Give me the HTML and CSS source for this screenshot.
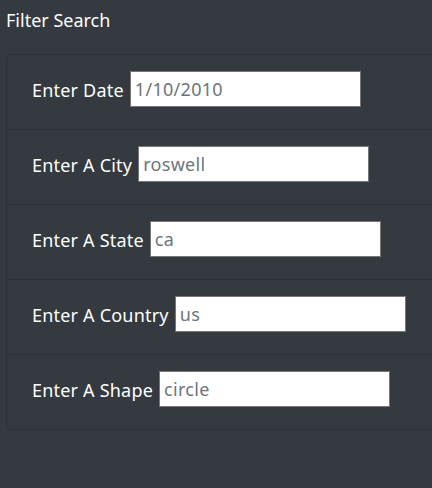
FILE: index.html
```html
<!DOCTYPE html>
<html>
<head>
<meta charset="utf-8">
<link rel="stylesheet" href="styles.css">
</head>
<body>
<div class="title">Filter Search</div>
<ul class="list">
  <li class="item"><label class="lbl">Enter Date</label><input class="field" type="text" placeholder="1/10/2010"></li>
  <li class="item"><label class="lbl">Enter A City</label><input class="field" type="text" placeholder="roswell"></li>
  <li class="item"><label class="lbl">Enter A State</label><input class="field" type="text" placeholder="ca"></li>
  <li class="item"><label class="lbl">Enter A Country</label><input class="field" type="text" placeholder="us"></li>
  <li class="item"><label class="lbl">Enter A Shape</label><input class="field" type="text" placeholder="circle"></li>
</ul>
</body>
</html>
```
FILE: styles.css
```css
html, body {
  margin: 0;
  padding: 0;
  background: #343a40;
  height: 100%;
}
body {
  font-family: "Noto Sans", "Open Sans", sans-serif;
  color: #ffffff;
  padding: 0 0 0 6px;
  box-sizing: border-box;
  overflow: hidden;
}
.title {
  font-size: 18px;
  line-height: 24px;
  padding-top: 8px;
  height: 54px;
  box-sizing: border-box;
}
.list {
  list-style: none;
  margin: 0;
  padding: 0;
  width: 440px;
  border: 1px solid rgba(0, 0, 0, 0.14);
  border-radius: 4px;
}
.item {
  display: flex;
  align-items: center;
  gap: 6px;
  height: 75px;
  padding: 0 0 6px 25px;
  box-sizing: border-box;
  border-top: 1px solid rgba(0, 0, 0, 0.14);
}
.item:first-child {
  border-top: none;
  height: 74px;
}
.lbl {
  font-size: 18px;
  letter-spacing: 0.2px;
  padding-top: 2px;
}
.field {
  width: 231px;
  height: 36px;
  box-sizing: border-box;
  border: 1px solid #767676;
  background: #fff;
  font-family: inherit;
  font-size: 18px;
  letter-spacing: 0.3px;
  padding: 0 4px;
  margin: 0;
  outline: none;
}
.field::placeholder {
  color: #6c757d;
  opacity: 1;
}
```
